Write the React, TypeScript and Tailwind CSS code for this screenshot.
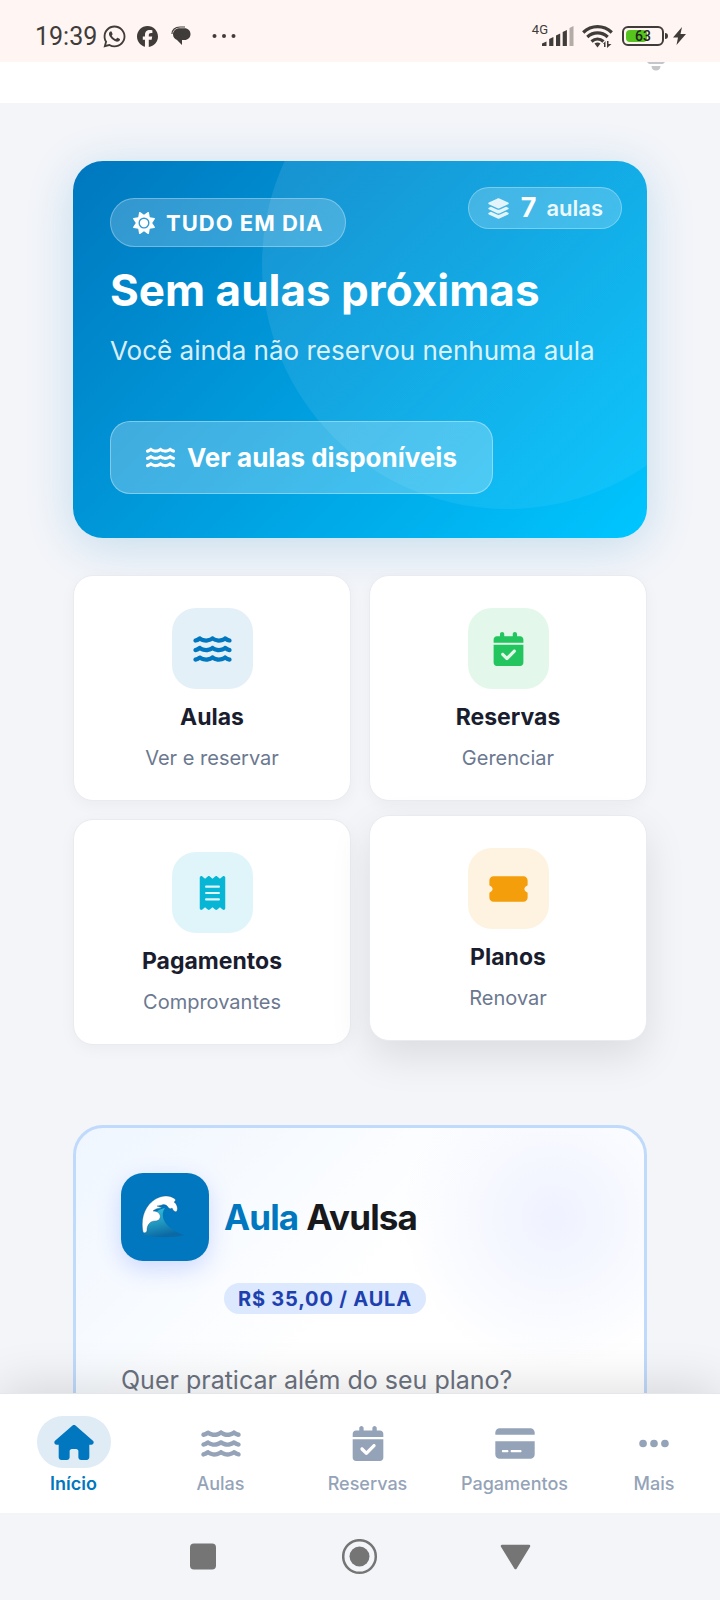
import React from "react";
import {
  FaWater,
  FaCalendarCheck,
  FaReceipt,
  FaTicketSimple,
  FaHouse,
  FaCreditCard,
  FaEllipsis,
  FaLayerGroup,
  FaSun,
  FaWhatsapp,
  FaFacebook,
} from "react-icons/fa6";
import type { IconType } from "react-icons";

type Tile = {
  title: string;
  subtitle: string;
  icon: IconType;
  tone: string;
  raised?: boolean;
};

const tiles: Tile[] = [
  { title: "Aulas", subtitle: "Ver e reservar", icon: FaWater, tone: "bg-[#e3f0f8] text-[#0077be]" },
  { title: "Reservas", subtitle: "Gerenciar", icon: FaCalendarCheck, tone: "bg-[#e3f7eb] text-[#22c55e]" },
  { title: "Pagamentos", subtitle: "Comprovantes", icon: FaReceipt, tone: "bg-[#e0f5fa] text-[#06b6d4]" },
  { title: "Planos", subtitle: "Renovar", icon: FaTicketSimple, tone: "bg-[#fef2e0] text-[#f59e0b]", raised: true },
];

const tabs: { label: string; icon: IconType; active?: boolean }[] = [
  { label: "Início", icon: FaHouse, active: true },
  { label: "Aulas", icon: FaWater },
  { label: "Reservas", icon: FaCalendarCheck },
  { label: "Pagamentos", icon: FaCreditCard },
  { label: "Mais", icon: FaEllipsis },
];

function StatusBar() {
  return (
    <div className="flex h-[62px] shrink-0 items-center bg-[#fff5f2] pt-[10px] pr-[34px] pl-[35px] text-[#403c3a]">
      <span className="pt-[2px] font-['Roboto',sans-serif] text-[25px] leading-7">19:39</span>
      <FaWhatsapp className="ml-[5px] size-[25px]" aria-label="WhatsApp" />
      <FaFacebook className="ml-[10px] size-[21px]" aria-label="Facebook" />
      <svg className="ml-[13px] h-5 w-5" viewBox="0 0 20 20" aria-label="Mensagens">
        <path d="M1 8C1 4 4 1 9 1h5" fill="none" stroke="currentColor" strokeWidth="1.2" />
        <path d="M8.500 2.200h5c3.600 0 6 2.500 6 5.900 0 3.600-2.500 6-6 6h-2.500V19l-5-5C3.600 13 2 11.100 2 8.300c0-3.500 2.800-6.100 6.500-6.100z" fill="currentColor" />
      </svg>
      <svg className="ml-5 h-6 w-7" viewBox="0 0 28 24" fill="currentColor" aria-label="Mais notificações">
        <circle cx="3.500" cy="12" r="2" />
        <circle cx="13" cy="12" r="2" />
        <circle cx="22.500" cy="12" r="2" />
      </svg>
      <span className="ml-auto self-start pt-[12px] font-['Roboto',sans-serif] text-[13px] leading-4">4G</span>
      <svg className="-ml-[6px] h-6 w-8" viewBox="0 0 32 24" fill="currentColor" aria-label="Sinal">
        <path d="M0 22v-2.500L4.500 17.500V22zM7.200 22v-7l4.200-2v9zM14 22V11.500l4.200-2V22zM20.700 22V8l4.200-2v16z" />
        <path d="M27.500 22V4l4-2v20z" opacity=".4" />
      </svg>
      <svg className="ml-2 h-6 w-8" viewBox="0 0 32 24" aria-label="Wi-Fi">
        <g fill="none" stroke="currentColor" strokeWidth="3.200">
          <path d="M1.200 8.500C9.500 .6 21.500 .6 29.800 8.500" />
          <path d="M5.300 13c5.900-5.400 14.500-5.400 20.400 0" />
          <path d="M9.500 17.500c3.700-3.200 8.300-3.200 12 0" />
        </g>
        <path d="M12.500 19.500q3-2 6 0l-3 4zM21 20l2.500-3v6h-1.500v-3zM25 17h1.500v3h3L25 24z" fill="currentColor" />
      </svg>
      <span className="ml-2 flex h-5 w-[42px] items-center rounded-md border-2 border-[#403c3a] p-[2px]">
        <span className="relative flex h-full w-full items-center justify-center">
          <span className="absolute inset-y-0 left-0 w-[63%] rounded-sm bg-[#55c41c]" />
          <span className="relative font-['Roboto',sans-serif] text-[14px] leading-4 font-medium text-[#222]">63</span>
        </span>
      </span>
      <span className="ml-px h-[6px] w-[3px] rounded-r-sm bg-[#403c3a]" />
      <svg className="ml-[5px] h-5 w-[13px]" viewBox="0 0 13 20" fill="currentColor" aria-label="Carregando">
        <path d="M9 1 0 11.500h5L3.500 19 13 8H7.500z" />
      </svg>
    </div>
  );
}

function Hero() {
  return (
    <section className="relative flex flex-col items-start overflow-hidden rounded-[30px] bg-linear-135 from-[#0077be] to-[#00c6ff] px-[37px] pt-[37px] pb-11 text-white">
      <span className="absolute -top-[142px] -right-[105px] size-[490px] rounded-full bg-linear-135 from-white/10 to-white/5" />
      <span className="absolute top-[26px] right-[25px] flex h-[42px] items-center rounded-full border border-white/30 bg-white/20 px-[18px] text-[22px] leading-7">
        <FaLayerGroup className="mr-[11px] size-[23px] opacity-85" />
        <span className="mr-[10px] text-[27px] font-bold">7</span>
        <span className="font-semibold opacity-90">aulas</span>
      </span>
      <span className="relative flex h-[49px] items-center gap-[11px] rounded-full border border-white/30 bg-white/20 px-[22px] text-[22px] leading-7 font-bold tracking-[1px]">
        <FaSun className="size-[22px]" />
        TUDO EM DIA
      </span>
      <h1 className="relative mt-[18px] text-[44px] leading-[50px] font-bold">Sem aulas próximas</h1>
      <p className="relative mt-5 text-[26px] leading-8 opacity-85">Você ainda não reservou nenhuma aula</p>
      <button className="relative mt-[54px] flex h-[73px] items-center gap-3 rounded-[20px] border border-white/35 bg-white/25 px-[35px] text-[26px] leading-8 font-bold">
        <FaWater className="size-[29px]" />
        Ver aulas disponíveis
      </button>
    </section>
  );
}

function TileCard({ title, subtitle, icon: Icon, tone, raised }: Tile) {
  return (
    <a
      href="#"
      className={
        "flex flex-col items-center rounded-[20px] border border-[#e9ebf0] bg-white pt-8 pb-[30px] " +
        (raised ? "-translate-y-1 shadow-[0_16px_40px_rgba(0,0,0,0.1)]" : "shadow-[0_4px_16px_rgba(0,0,0,0.04)]")
      }
    >
      <span className={"flex size-[81px] items-center justify-center rounded-3xl " + tone}>
        <Icon className="h-[34px] w-[39px]" />
      </span>
      <strong className="mt-3 text-[23px] leading-8 font-bold text-[#1a1d2e]">{title}</strong>
      <span className="mt-[13px] text-[20px] leading-6 text-[#6b7890]">{subtitle}</span>
    </a>
  );
}

function WaveEmoji() {
  return (
    <svg className="size-[44px]" viewBox="0 0 44 44" aria-hidden="true">
      <defs>
        <linearGradient id="sea" x1="0" y1="0" x2="0.300" y2="1">
          <stop offset="0" stopColor="#35c3dc" />
          <stop offset=".55" stopColor="#2299c0" />
          <stop offset="1" stopColor="#0b6aa5" />
        </linearGradient>
      </defs>
      <path d="M3 40c1-13 10-25 21-27-5 7-1 14 4 19 5 4 9 6 15 8-8 3-29 3-40 0z" fill="url(#sea)" />
      <path
        d="M2 37C-1 22 5 7 19 2c6-2 11-1 15 2 1 1 0 3-1 3 3 2 4 6 3 9-2 2-4-1-5-3-1 1-3 1-4-1-1-2-4-3-6-2-1 0-3 1-5 1 2 1 4 1 5 2-4 0-7 1-9 3 3 0 6 1 7 4 1 3-1 6-5 6-5 0-8 4-8 9 0 2-2 4-4 2z"
        fill="#fff"
        stroke="#17557a"
        strokeOpacity=".5"
        strokeWidth=".7"
      />
    </svg>
  );
}

function SingleClass() {
  return (
    <section className="relative mt-20 overflow-hidden rounded-[30px] border-[3px] border-[#c0dafb] bg-linear-135 from-[#eff6ff] via-white to-white px-[45px] pt-[45px] pb-16">
      <span className="absolute -top-[90px] -right-[90px] size-[360px] bg-[radial-gradient(circle,rgba(99,130,255,0.10),transparent_60%)]" />
      <div className="relative flex items-start gap-[15px]">
        <span className="flex size-[88px] items-center justify-center rounded-[22px] bg-[#0077be] pr-1 shadow-[0_8px_24px_rgba(60,100,255,0.22)]">
          <WaveEmoji />
        </span>
        <div>
          <h2 className="flex h-[88px] items-center gap-2 text-[35px] leading-[44px] font-bold tracking-tight text-[#18191c]">
            <span className="text-[#0077be]">Aula</span>
            <span>Avulsa</span>
          </h2>
          <span className="mt-[22px] inline-flex h-[31px] items-center rounded-full bg-[#dbe8fd] px-[14px] text-[20px] leading-6 font-bold tracking-[0.8px] text-[#1e40af]">
            R$ 35,00 / AULA
          </span>
        </div>
      </div>
      <p className="relative mt-12 text-[25px] leading-9 text-[#6b7280]">Quer praticar além do seu plano?</p>
    </section>
  );
}

function BottomNav() {
  return (
    <nav className="relative z-10 grid h-[120px] shrink-0 grid-cols-[repeat(4,147fr)_132fr] border-t border-[#e4e6ea] bg-white pt-[22px] shadow-[0_-8px_48px_rgba(0,0,0,0.12)]">
      {tabs.map(({ label, icon: Icon, active }) => (
        <a
          key={label}
          href="#"
          className={"flex flex-col items-center text-[18px] leading-6 " + (active ? "font-semibold text-[#0077be]" : "font-medium text-[#94a3b8]")}
        >
          <span className={"flex h-[52px] w-[74px] items-center justify-center rounded-full " + (active ? "bg-[#dfebf5]" : "pt-[2px]")}>
            <Icon className="h-[35px] w-[40px]" />
          </span>
          <span className="mt-1">{label}</span>
        </a>
      ))}
    </nav>
  );
}

function SystemNav() {
  return (
    <div className="relative z-10 flex h-[87px] shrink-0 items-center justify-center gap-[120px] bg-[#f3f5f9] text-[#757575]">
      <button aria-label="Recentes">
        <svg className="size-9" viewBox="0 0 36 36">
          <rect x="4" y="4.500" width="26" height="26" rx="4" fill="currentColor" />
        </svg>
      </button>
      <button aria-label="Tela inicial">
        <svg className="size-9" viewBox="0 0 36 36">
          <circle cx="17.500" cy="17.500" r="16.300" fill="none" stroke="currentColor" strokeWidth="2.500" />
          <circle cx="17.500" cy="17.500" r="10" fill="currentColor" />
        </svg>
      </button>
      <button aria-label="Voltar">
        <svg className="size-9" viewBox="0 0 36 36">
          <path d="M4 7h27L17.500 29z" fill="currentColor" stroke="currentColor" strokeWidth="2.500" strokeLinejoin="round" />
        </svg>
      </button>
    </div>
  );
}

export default function App() {
  return (
    <div className="flex h-screen flex-col overflow-hidden bg-[#f3f5f9] font-['Inter',sans-serif]">
      <StatusBar />
      <div className="min-h-0 flex-1 overflow-y-auto [scrollbar-width:none]">
        <header className="flex h-[41px] justify-end bg-white pr-[55px]">
          <button className="h-[9px]" aria-label="Notificações">
            <svg className="h-[9px] w-[18px]" viewBox="0 0 18 9" fill="#c4c6ca">
              <path d="M0 0h18l-2 2H2zM4.500 4h9c0 3-2 4.500-4.500 4.500S4.500 7 4.500 4z" />
            </svg>
          </button>
        </header>
        <main className="px-[73px] pt-[58px]">
          <div className="rounded-[30px] shadow-[0_8px_48px_rgba(0,119,190,0.2)]">
            <Hero />
          </div>
          <div className="mt-[37px] grid grid-cols-2 gap-[18px]">
            {tiles.map((tile) => (
              <TileCard key={tile.title} {...tile} />
            ))}
          </div>
          <SingleClass />
        </main>
      </div>
      <BottomNav />
      <SystemNav />
    </div>
  );
}
